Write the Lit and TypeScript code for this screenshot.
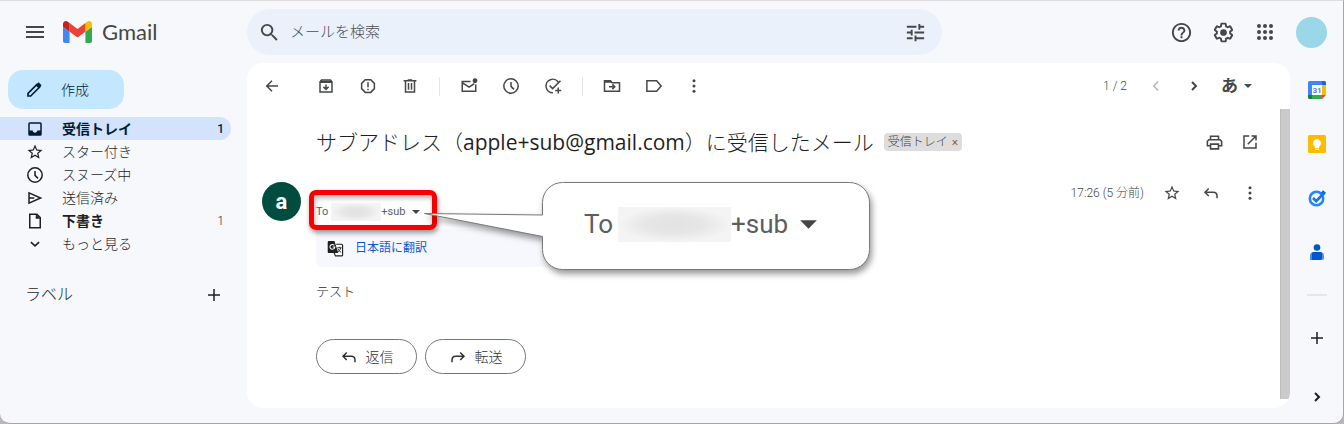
import { LitElement, html, css, svg, nothing } from "lit";
import { customElement, property } from "lit/decorators.js";
import { classMap } from "lit/directives/class-map.js";

const line = (d: string, w = 2) =>
  svg`<path d=${d} fill="none" stroke="currentColor" stroke-width=${w}></path>`;
const fill = (d: string) => svg`<path d=${d} fill="currentColor" fill-rule="evenodd"></path>`;

const icons: Record<string, unknown> = {
  menu: fill("M3 18h18v-2H3v2zm0-5h18v-2H3v2zm0-7v2h18V6H3z"),
  search: fill(
    "M15.5 14h-.79l-.28-.27A6.47 6.47 0 0 0 16 9.5 6.5 6.5 0 1 0 9.5 16c1.61 0 3.09-.59 4.23-1.57l.27.28v.79l5 4.99L20.49 19l-4.99-5zm-6 0C7.01 14 5 11.99 5 9.5S7.01 5 9.5 5 14 7.01 14 9.5 11.99 14 9.5 14z"
  ),
  tune: fill(
    "M3 17v2h6v-2H3zM3 5v2h10V5H3zm10 16v-2h8v-2h-8v-2h-2v6h2zM7 9v2H3v2h4v2h2V9H7zm14 4v-2H11v2h10zm-6-4h2V7h4V5h-4V3h-2v6z"
  ),
  help: fill(
    "M11 18h2v-2h-2v2zm1-16C6.48 2 2 6.48 2 12s4.48 10 10 10 10-4.48 10-10S17.52 2 12 2zm0 18c-4.41 0-8-3.59-8-8s3.59-8 8-8 8 3.59 8 8-3.59 8-8 8zm0-14c-2.21 0-4 1.79-4 4h2c0-1.1.9-2 2-2s2 .9 2 2c0 2-3 1.75-3 5h2c0-2.25 3-2.5 3-5 0-2.21-1.79-4-4-4z"
  ),
  settings: svg`${fill(
    "M13.85 22.25h-3.7c-.74 0-1.36-.54-1.45-1.27l-.27-1.89c-.27-.14-.53-.29-.79-.46l-1.8.72c-.7.26-1.47-.03-1.81-.65L2.2 15.53c-.35-.66-.2-1.44.36-1.88l1.53-1.19c-.01-.15-.02-.3-.02-.46 0-.15.01-.31.02-.46l-1.52-1.19c-.59-.45-.74-1.26-.37-1.88l1.85-3.19c.34-.62 1.11-.9 1.79-.63l1.81.73c.26-.17.52-.32.78-.46l.27-1.91c.09-.7.71-1.25 1.44-1.25h3.7c.74 0 1.36.54 1.45 1.27l.27 1.89c.27.14.53.29.79.46l1.8-.72c.71-.26 1.48.03 1.82.65l1.84 3.18c.36.66.2 1.44-.36 1.88l-1.52 1.19c.01.15.02.3.02.46s-.01.31-.02.46l1.52 1.19c.56.45.72 1.23.37 1.86l-1.86 3.22c-.34.62-1.11.9-1.8.63l-1.8-.72c-.26.17-.52.32-.78.46l-.27 1.91c-.1.68-.72 1.22-1.46 1.22zm-3.23-2h2.76l.37-2.55.53-.22c.44-.18.88-.44 1.34-.78l.45-.34 2.38.96 1.38-2.4-2.03-1.58.07-.56c.03-.26.06-.51.06-.78s-.03-.53-.06-.78l-.07-.56 2.03-1.58-1.39-2.4-2.39.96-.45-.35c-.42-.32-.87-.58-1.33-.77l-.52-.22-.37-2.55h-2.76l-.37 2.55-.53.21c-.44.19-.88.44-1.34.79l-.45.33-2.38-.95-1.39 2.39 2.03 1.58-.07.56a7 7 0 0 0-.06.79c0 .26.02.53.06.78l.07.56-2.03 1.58 1.38 2.4 2.39-.96.45.35c.43.33.86.58 1.33.77l.53.22.38 2.55z"
  )}<circle cx="12" cy="12" r="3.5" fill="currentColor"></circle>`,
  apps: svg`${[6, 12, 18].map((y) =>
    [6, 12, 18].map((x) => svg`<circle cx=${x} cy=${y} r="2" fill="currentColor"></circle>`)
  )}`,
  pencil: svg`${line("M4 20v-3.6L15.6 4.8l3.6 3.6L7.6 20z", 2.2)}${fill(
    "M14 5.5l3-2.9c.6-.6 1.5-.6 2.1 0l2.3 2.3c.6.6.6 1.5 0 2.1l-3 2.9z"
  )}`,
  inbox: fill(
    "M19 3H5a2 2 0 0 0-2 2v14a2 2 0 0 0 2 2h14a2 2 0 0 0 2-2V5a2 2 0 0 0-2-2zm0 11h-4c0 1.66-1.35 3-3 3s-3-1.34-3-3H5V5h14v9z"
  ),
  star: fill(
    "M22 9.24l-7.19-.62L12 2 9.19 8.63 2 9.24l5.46 4.73L5.82 21 12 17.27 18.18 21l-1.63-7.03L22 9.24zM12 15.4l-3.76 2.27 1-4.28-3.32-2.88 4.38-.38L12 6.1l1.71 4.04 4.38.38-3.32 2.88 1 4.28L12 15.4z"
  ),
  clock: svg`<circle cx="12" cy="12" r="9.6" fill="none" stroke="currentColor" stroke-width="2"></circle>${line("M12 6.5v6l4 4")}`,
  send: svg`${line("M4 5.2v13.6L19.5 12z")}${line("M4 12h7")}`,
  file: svg`${line("M5 3h9.5L19 7.500V21H5z")}${fill("M13 3v6h6z")}`,
  down: line("M6.500 9.500l5.500 5 5.500-5"),
  plus: line("M12 4v16M4 12h16"),
  back: line("M20 12H5M12 5l-7 7 7 7"),
  archive: svg`${line("M4 6.500v13.500h16V6.500zM4 6.500L6 4h12l2 2.500")}${fill("M4 5h16v3H4z")}${line(
    "M12 10v6M8.500 13l3.500 3.500 3.500-3.500"
  )}`,
  spam: line(
    "M8.300 3.500h7.400l4.800 5v7l-4.800 5H8.300l-4.800-5v-7zM12 7v6.500M12 15.500v2"
  ),
  trash: svg`${line("M6 6v14h12V6M3.500 5h17M9 4h6")}${line("M10 8v9M14 8v9")}`,
  unread: svg`${line("M14 6H3v13h18V10M3 7.500l9 6 7-4.500")}<circle cx="20" cy="5" r="3.200" fill="currentColor"></circle>`,
  task: svg`${line("M19.500 7.500A9 9 0 1 0 12 21M7.500 11.500l4 4L22 5")}${line("M19 14v8M15 18h8")}`,
  move: svg`${line("M2 5h8l2 2.500h10V19H2z")}${fill("M2 4h8l2.500 3.500H2z")}${line("M8 13h7M12.500 9.800l3.200 3.200-3.200 3.200")}`,
  label: line("M2.500 5h13l6 7-6 7h-13z"),
  more: svg`${[5, 12, 19].map((y) => svg`<circle cx="12" cy=${y} r="2" fill="currentColor"></circle>`)}`,
  left: line("M15 6l-6 6 6 6"),
  right: line("M9 6l6 6-6 6", 3),
  caret: fill("M4 8h16l-8 8z"),
  print: svg`${line("M7 8V4h10v4M7 16H3v-5.500L5 8.500h14l2 2V16h-4M7 14h10v6H7z")}`,
  open: line("M11 4H4v16h16v-7M14 4h6v6M20 4L9 15"),
  reply: line("M9 6l-5 5 5 5M4 11h11c3 0 5 2 5 5v3"),
  forward: line("M15 6l5 5-5 5M20 11H9c-3 0-5 2-5 5v3"),
  translate: svg`
    <path d="M13 6h7.500A1.500 1.500 0 0 1 22 7.500V21a1.500 1.500 0 0 1-1.500 1.500H12L10 18" fill="#fff" stroke="currentColor" stroke-width="1.600"></path>
    <path d="M2.500 1.500h8l5.500 17H2.500A1.500 1.500 0 0 1 1 17V3a1.500 1.500 0 0 1 1.500-1.500z" fill="currentColor"></path>
    <path d="M10.300 7.600A3.400 3.400 0 1 0 11 10H8" fill="none" stroke="#fff" stroke-width="1.500"></path>
    <path d="M14.500 11h6M17.500 9.500V11M19.500 11c-.5 3-2.500 5-4.500 6M15.500 12.500c.8 2 2.500 4 4.500 5" fill="none" stroke="currentColor" stroke-width="1.300"></path>`,
};

const icon = (name: string, size = 18) =>
  html`<svg width=${size} height=${size} viewBox="0 0 24 24" aria-hidden="true">${icons[name]}</svg>`;

const base = css`
  * {
    box-sizing: border-box;
  }
  svg {
    display: block;
    flex: none;
  }
  button {
    display: flex;
    align-items: center;
    justify-content: center;
    padding: 0;
    border: 0;
    background: none;
    color: inherit;
    font: inherit;
    cursor: pointer;
  }
  a {
    color: inherit;
    text-decoration: none;
  }
`;

@customElement("app-header")
class AppHeader extends LitElement {
  static styles = [
    base,
    css`
      :host {
        display: flex;
        align-items: center;
        height: 62px;
        padding: 0 16px 0 14px;
        color: #444746;
      }
      .icon {
        width: 42px;
        height: 42px;
      }
      .brand {
        display: flex;
        align-items: center;
        gap: 10px;
        width: 191px;
        padding-left: 7px;
        font: 400 22px/28px Lato, sans-serif;
      }
      .search {
        display: flex;
        align-items: center;
        flex: 0 1 695px;
        height: 46px;
        padding: 0 6px 0 1px;
        border-radius: 23px;
        background: #eaf1fb;
      }
      .search input {
        flex: 1;
        min-width: 0;
        height: 30px;
        padding: 0;
        border: 0;
        outline: 0;
        background: none;
        color: #1f1f1f;
        font: inherit;
        font-size: 15px;
      }
      .search input::placeholder {
        color: #4b4e52;
        opacity: 1;
      }
      .account {
        display: flex;
        align-items: center;
        margin-left: auto;
      }
      .avatar {
        width: 31px;
        height: 31px;
        margin-left: 10px;
        border-radius: 50%;
        background: #99d7e9;
      }
    `,
  ];
  render() {
    return html`
      <button class="icon" aria-label="メインメニュー">${icon("menu", 24)}</button>
      <a class="brand" href="#inbox">
        <svg width="29" height="22" viewBox="52 42 88 66" aria-hidden="true">
          <path fill="#4285f4" d="M58 108h14V74L52 59v43c0 3.320 2.690 6 6 6"></path>
          <path fill="#34a853" d="M120 108h14c3.320 0 6-2.690 6-6V59l-20 15"></path>
          <path fill="#fbbc04" d="M120 48v26l20-15v-8c0-7.420-8.470-11.650-14.400-7.200"></path>
          <path fill="#ea4335" d="M72 74V48l24 18 24-18v26L96 92"></path>
          <path fill="#c5221f" d="M52 51v8l20 15V48l-5.600-4.200c-5.940-4.450-14.400-.22-14.400 7.200"></path>
        </svg>
        <span>Gmail</span>
      </a>
      <form class="search" role="search">
        <button class="icon" type="button" aria-label="検索">${icon("search", 23)}</button>
        <input type="search" aria-label="メールを検索" placeholder="メールを検索" />
        <button class="icon" type="button" aria-label="検索オプション">${icon("tune", 23)}</button>
      </form>
      <div class="account">
        <button class="icon" aria-label="サポート">${icon("help", 23)}</button>
        <button class="icon" aria-label="設定">${icon("settings", 23)}</button>
        <button class="icon" aria-label="アプリ">${icon("apps", 24)}</button>
        <button class="avatar" aria-label="アカウント"></button>
      </div>
    `;
  }
}

interface Folder {
  icon: string;
  name: string;
  count?: number;
  active?: boolean;
  bold?: boolean;
}

const folders: Folder[] = [
  { icon: "inbox", name: "受信トレイ", count: 1, active: true, bold: true },
  { icon: "star", name: "スター付き" },
  { icon: "clock", name: "スヌーズ中" },
  { icon: "send", name: "送信済み" },
  { icon: "file", name: "下書き", count: 1, bold: true },
  { icon: "down", name: "もっと見る" },
];

@customElement("folder-nav")
class FolderNav extends LitElement {
  static styles = [
    base,
    css`
      :host {
        display: block;
        width: 247px;
        flex: none;
        padding-top: 7px;
        color: #1f1f1f;
        font-size: 14px;
      }
      .compose {
        justify-content: flex-start;
        gap: 18px;
        width: 116px;
        height: 39px;
        margin-left: 8px;
        padding-left: 17px;
        border-radius: 15px;
        background: #c2e7ff;
        color: #001d35;
      }
      nav {
        margin-top: 8px;
      }
      .folder {
        display: flex;
        align-items: center;
        gap: 18px;
        height: 23px;
        margin-right: 16px;
        padding: 0 7px 0 26px;
        border-radius: 0 12px 12px 0;
      }
      .active {
        background: #d3e3fd;
        color: #001d35;
      }
      .bold .name {
        font-weight: 700;
      }
      .count {
        margin-left: auto;
        font-size: 12px;
      }
      .active .count {
        font-weight: 500;
      }
      .labels {
        display: flex;
        align-items: center;
        justify-content: space-between;
        margin-top: 29px;
        padding: 0 24px 0 25px;
      }
      h2 {
        margin: 0;
        font-size: 16px;
        font-weight: 300;
        line-height: 22px;
      }
    `,
  ];
  render() {
    return html`
      <button class="compose">${icon("pencil")}<span>作成</span></button>
      <nav>
        ${folders.map(
          (f) => html`<a
            class=${classMap({ folder: true, active: !!f.active, bold: !!f.bold })}
            href="#"
          >
            ${icon(f.icon)}<span class="name">${f.name}</span>
            ${f.count ? html`<span class="count">${f.count}</span>` : nothing}
          </a>`
        )}
      </nav>
      <div class="labels">
        <h2>ラベル</h2>
        <button aria-label="新しいラベルを作成">${icon("plus")}</button>
      </div>
    `;
  }
}

@customElement("mail-toolbar")
class MailToolbar extends LitElement {
  static styles = [
    base,
    css`
      :host {
        display: flex;
        align-items: center;
        height: 46px;
        padding: 0 36px 0 4px;
        color: #444746;
      }
      .tool {
        width: 42px;
        height: 32px;
      }
      .back {
        margin-right: 12px;
      }
      .narrow {
        width: 38px;
      }
      .rule {
        width: 1px;
        height: 19px;
        margin: 0 8px;
        background: #e3e5e8;
      }
      .pager {
        display: flex;
        align-items: center;
        margin-left: auto;
      }
      .position {
        margin-right: 10px;
        color: #444746;
        font-size: 12px;
      }
      .faded {
        color: #b4b6b8;
      }
      .lang {
        gap: 4px;
        margin-left: 8px;
        font-size: 17px;
        font-weight: 700;
      }
    `,
  ];
  private tool(name: string, label: string) {
    return html`<button class="tool" aria-label=${label}>${icon(name)}</button>`;
  }
  render() {
    return html`
      <button class="tool back" aria-label="受信トレイに戻る">${icon("back")}</button>
      ${this.tool("archive", "アーカイブ")}${this.tool("spam", "迷惑メールを報告")}
      ${this.tool("trash", "削除")}
      <span class="rule"></span>
      ${this.tool("unread", "未読にする")}${this.tool("clock", "スヌーズ")}
      ${this.tool("task", "ToDo リストに追加")}
      <span class="rule"></span>
      ${this.tool("move", "移動")}${this.tool("label", "ラベル")}
      <button class="tool narrow" aria-label="その他">${icon("more")}</button>
      <div class="pager">
        <span class="position">1 / 2</span>
        <button class="tool narrow faded" aria-label="前">${icon("left")}</button>
        <button class="tool narrow" aria-label="次">${icon("right", 16)}</button>
        <button class="lang" aria-label="入力ツール">あ${icon("caret", 12)}</button>
      </div>
    `;
  }
}

@customElement("recipient-line")
class RecipientLine extends LitElement {
  @property({ type: Boolean, reflect: true }) large = false;
  static styles = [
    base,
    css`
      :host {
        display: flex;
        align-items: center;
        color: #5e5e5e;
        font: 400 11px/20px Roboto, sans-serif;
      }
      .mask {
        width: 50px;
        height: 18px;
        margin-left: 3px;
        background: radial-gradient(closest-side, #e2e2e2, #e6e6e6 50%, #f4f4f4);
      }
      .toggle {
        margin-left: 5px;
        color: #444;
      }
      :host([large]) {
        font-size: 26px;
        line-height: 36px;
      }
      :host([large]) .mask {
        width: 113px;
        height: 35px;
        margin-left: 5px;
      }
      :host([large]) .toggle {
        margin-left: 8px;
      }
    `,
  ];
  render() {
    return html`<span>To</span><span class="mask"></span><span>+sub</span>
      <button class="toggle" aria-label="詳細を表示">${icon("caret", this.large ? 25 : 12)}</button>`;
  }
}

@customElement("mail-message")
class MailMessage extends LitElement {
  static styles = [
    base,
    css`
      :host {
        display: block;
        flex: 1;
        min-width: 0;
        padding: 12px 12px 24px 15px;
        color: #1f1f1f;
      }
      .subject {
        display: flex;
        align-items: center;
        gap: 10px;
        height: 42px;
        padding-left: 54px;
      }
      h1 {
        margin: 0;
        font-size: 21px;
        font-weight: 300;
        line-height: 28px;
        white-space: nowrap;
      }
      .address {
        font-family: "Open Sans", sans-serif;
        font-weight: 400;
      }
      .chip {
        display: flex;
        align-items: center;
        gap: 4px;
        height: 18px;
        padding: 0 4px;
        border-radius: 4px;
        background: #ddd;
        color: #444;
        font-size: 12px;
        line-height: 18px;
        white-space: nowrap;
      }
      .actions {
        display: flex;
        align-items: center;
        margin-left: auto;
        color: #444746;
      }
      .actions button {
        width: 36px;
        height: 32px;
      }
      .message {
        display: flex;
        gap: 15px;
        padding-top: 14px;
      }
      .avatar {
        display: grid;
        place-items: center;
        flex: none;
        width: 39px;
        height: 39px;
        margin-top: 5px;
        border-radius: 50%;
        background: #004d40;
        color: #fff;
        font: 700 22px/24px Roboto, sans-serif;
      }
      .content {
        flex: 1;
        min-width: 0;
      }
      .top {
        display: flex;
        justify-content: space-between;
        align-items: flex-start;
        height: 52px;
      }
      .recipient {
        position: relative;
        padding-top: 25px;
      }
      .marker {
        position: absolute;
        left: -7px;
        top: 13px;
        width: 128px;
        height: 40px;
        border: 5px solid #f80000;
        border-radius: 7px;
        box-shadow: 1px 3px 5px rgba(0, 0, 0, 0.4), inset 1px 3px 5px rgba(0, 0, 0, 0.3);
      }
      .callout {
        position: absolute;
        z-index: 1;
        left: 107px;
        top: 5px;
        width: 448px;
        height: 90px;
        padding: 24px 0 0 161px;
      }
      .bubble {
        position: absolute;
        inset: 0;
        overflow: visible;
        filter: drop-shadow(2px 4px 3px rgba(0, 0, 0, 0.4));
      }
      .callout recipient-line {
        position: relative;
      }
      .message .actions button {
        width: 39px;
      }
      .message .actions {
        margin-right: -1px;
      }
      .time {
        margin-right: 8px;
        color: #444746;
        font-size: 12px;
      }
      .translate {
        display: flex;
        align-items: center;
        gap: 11px;
        width: 440px;
        height: 38px;
        padding-left: 11px;
        border-radius: 0 0 6px 6px;
        background: #f6f8fd;
        font-size: 12px;
      }
      .translate a {
        color: #0b57d0;
        font-weight: 400;
      }
      .body {
        margin: 14px 0 0;
        font-size: 13px;
        line-height: 22px;
      }
      .replies {
        display: flex;
        gap: 8px;
        margin-top: 36px;
      }
      .replies button {
        gap: 8px;
        width: 101px;
        height: 35px;
        border: 1px solid #747775;
        border-radius: 18px;
        color: #303336;
        font-size: 14px;
      }
    `,
  ];
  render() {
    return html`
      <div class="subject">
        <h1>サブアドレス（<span class="address">apple+sub@gmail.com</span>）に受信したメール</h1>
        <button class="chip"><span>受信トレイ</span><span>×</span></button>
        <div class="actions">
          <button aria-label="印刷">${icon("print", 19)}</button>
          <button aria-label="新しいウィンドウで開く">${icon("open")}</button>
        </div>
      </div>
      <div class="message">
        <span class="avatar">a</span>
        <div class="content">
          <div class="top">
            <div class="recipient">
              <recipient-line></recipient-line>
              <div class="marker"></div>
              <div class="callout">
                <svg class="bubble" width="448" height="90" viewBox="0 0 448 90" aria-hidden="true">
                  <path
                    d="M140.500 .5h286a20 20 0 0 1 20 20v47a20 20 0 0 1-20 20h-287a20 20 0 0 1-20-20v-13L1.500 31.500l118 1.500V20.500a20 20 0 0 1 20-20z"
                    fill="#fff"
                    stroke="#777"
                  ></path>
                </svg>
                <recipient-line large></recipient-line>
              </div>
            </div>
            <div class="actions">
              <span class="time">17:26 (5 分前)</span>
              <button aria-label="スター">${icon("star")}</button>
              <button aria-label="返信">${icon("reply")}</button>
              <button aria-label="その他">${icon("more")}</button>
            </div>
          </div>
          <div class="translate">${icon("translate", 17)}<a href="#translate">日本語に翻訳</a></div>
          <p class="body">テスト</p>
          <div class="replies">
            <button>${icon("reply")}<span>返信</span></button>
            <button>${icon("forward")}<span>転送</span></button>
          </div>
        </div>
      </div>
    `;
  }
}

@customElement("side-panel")
class SidePanel extends LitElement {
  static styles = [
    base,
    css`
      :host {
        display: flex;
        flex-direction: column;
        align-items: center;
        flex: none;
        width: 53px;
        color: #1f1f1f;
      }
      button {
        width: 40px;
        height: 54px;
      }
      .rule {
        width: 20px;
        height: 2px;
        margin: 15px 0;
        background: #e6e6e6;
      }
      .collapse {
        height: 24px;
        margin-top: auto;
      }
    `,
  ];
  render() {
    return html`
      <button aria-label="カレンダー">
        <svg width="18" height="18" viewBox="0 0 18 18">
          <path fill="#fff" d="M3 3h12v12H3z"></path>
          <path fill="#4285f4" d="M1.500 0H14v4H4v10H0V1.500A1.500 1.500 0 0 1 1.500 0z"></path>
          <path fill="#1967d2" d="M14 0h2.500A1.500 1.500 0 0 1 18 1.500V4h-4z"></path>
          <path fill="#fbbc04" d="M14 4h4v10h-4z"></path>
          <path fill="#34a853" d="M4 14h10v4H4z"></path>
          <path fill="#188038" d="M0 14h4v4H1.500A1.500 1.500 0 0 1 0 16.500z"></path>
          <path fill="#ea4335" d="M14 14h4l-4 4z"></path>
          <text x="9" y="12" text-anchor="middle" font-family="Roboto" font-size="8" font-weight="700" fill="#4285f4">31</text>
        </svg>
      </button>
      <button aria-label="Keep">
        <svg width="18" height="18" viewBox="0 0 18 18">
          <rect width="18" height="18" rx="1.500" fill="#fbbc04"></rect>
          <path fill="#fff" d="M9 4.200a4 4 0 0 0-2.200 7.300V13h4.400v-1.500A4 4 0 0 0 9 4.200zM7 13.700h4V15H7z"></path>
        </svg>
      </button>
      <button aria-label="ToDo リスト">
        <svg width="18" height="18" viewBox="0 0 18 18">
          <circle cx="8.500" cy="9.500" r="6.700" fill="none" stroke="#2684fc" stroke-width="2.600"></circle>
          <path d="M14 2.500l3 2.500" stroke="#0066da" stroke-width="3"></path>
          <path d="M5 9l3.200 3.200L16 4" fill="none" stroke="#1a73e8" stroke-width="2.600"></path>
        </svg>
      </button>
      <button aria-label="連絡先">
        <svg width="14" height="17" viewBox="0 0 14 17">
          <circle cx="7" cy="3.500" r="3.300" fill="#0057cc"></circle>
          <path fill="#4f8af8" d="M4 8h6a4 4 0 0 1 4 4v2a2 2 0 0 1-2 2H0v-4a4 4 0 0 1 4-4z"></path>
          <path fill="#0057cc" d="M4 8h6a3 3 0 0 1 2 1v5a2 2 0 0 1-2 2H2V9a3 3 0 0 1 2-1z"></path>
        </svg>
      </button>
      <span class="rule"></span>
      <button aria-label="アドオンを取得">${icon("plus")}</button>
      <button class="collapse" aria-label="サイドパネルを非表示">${icon("right", 16)}</button>
    `;
  }
}

@customElement("app-root")
class AppRoot extends LitElement {
  static styles = [
    base,
    css`
      :host {
        display: block;
        background: #b9b9b9;
        font: 300 14px/20px Roboto, "Noto Sans CJK JP", sans-serif;
      }
      .window {
        display: flex;
        flex-direction: column;
        min-height: 100vh;
        border: solid #a6a6a6;
        border-width: 1px 1px 1px 0;
        border-top-color: #dcdcdc;
        border-radius: 0 0 10px 10px;
        background: #f6f8fc;
      }
      .columns {
        display: flex;
        flex: 1;
      }
      .card {
        display: flex;
        flex-direction: column;
        flex: 1;
        min-width: 0;
        margin-bottom: 15px;
        border-radius: 16px;
        overflow: hidden;
        background: #fff;
      }
      .scroller {
        display: flex;
        flex: 1;
      }
      .scrollbar {
        width: 10px;
        margin-bottom: 9px;
        border-left: 1px solid #bdbdbd;
        background: #cacaca;
      }
      side-panel {
        margin-bottom: 14px;
      }
    `,
  ];
  render() {
    return html`
      <div class="window">
        <app-header></app-header>
        <div class="columns">
          <folder-nav></folder-nav>
          <main class="card">
            <mail-toolbar></mail-toolbar>
            <div class="scroller">
              <mail-message></mail-message>
              <div class="scrollbar"></div>
            </div>
          </main>
          <side-panel></side-panel>
        </div>
      </div>
    `;
  }
}
